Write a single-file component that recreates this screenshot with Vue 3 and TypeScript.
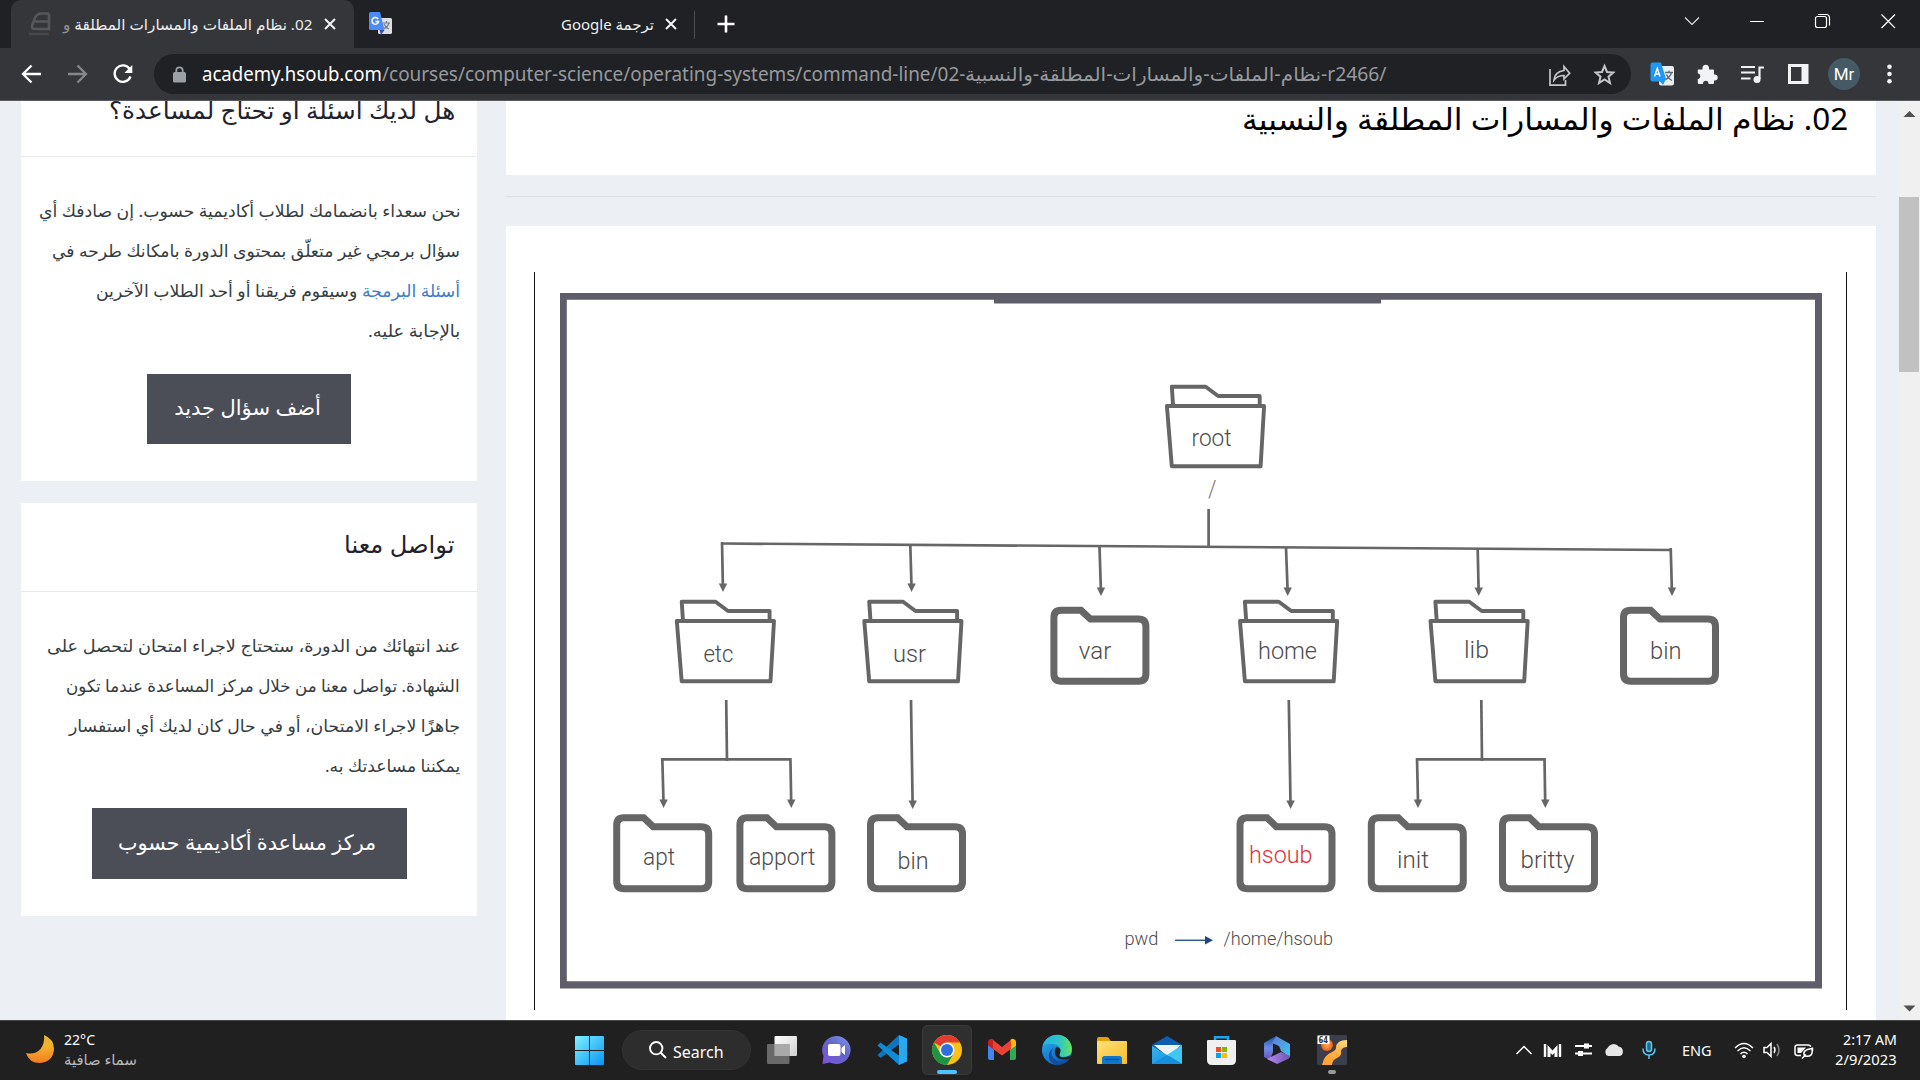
<script setup lang="ts">
interface Pt { x: number; y: number }
interface Label extends Pt { text: string; w: number; cls?: string; size?: number }
interface Line { text: string; w: number; link?: string }

/* Squeezes or stretches a single line of text to the given width. */
const vFit = {
  mounted(el: HTMLElement, binding: { value: number }) {
    const inner = el.firstElementChild as HTMLElement
    el.style.width = binding.value + 'px'
    const natural = inner.offsetWidth
    if (natural > 0) inner.style.transform = `scaleX(${binding.value / natural})`
  },
}

const openFolders: Pt[] = [
  { x: 1166.9, y: 406 }, { x: 676.8, y: 621 }, { x: 864.3, y: 621 }, { x: 1240, y: 621 }, { x: 1430.5, y: 621 },
]
const closedFolders: Pt[] = [
  { x: 1050.4, y: 606.7 }, { x: 1620, y: 606.7 }, { x: 613.2, y: 814.3 }, { x: 736.4, y: 814.3 },
  { x: 867, y: 814.3 }, { x: 1236.5, y: 814.3 }, { x: 1367.8, y: 814.3 }, { x: 1499, y: 814.3 },
]
const links: string[] = [
  'M722.3 543.5L1671.2 550', 'M1208.6 509V547',
  'M722 542L722.9 586', 'M910.3 545L911.5 586', 'M1099.5 547L1100.9 590', 'M1286 548L1287.6 590',
  'M1477.7 549L1478.6 590', 'M1670.7 548L1671.9 590',
  'M726.2 700L727 761', 'M662.3 759.3H790.4', 'M662.3 758L663.5 802', 'M790.4 758L791.2 802',
  'M911 700L912.6 803', 'M1288.8 700L1290.5 803', 'M1481.3 700L1482 761',
  'M1417 759.3H1544.5', 'M1417 758L1418 802', 'M1544.5 758L1545.2 802',
]
const tips: Pt[] = [
  { x: 723, y: 591 }, { x: 911.6, y: 591 }, { x: 1101, y: 595 }, { x: 1287.7, y: 595 }, { x: 1478.7, y: 595 },
  { x: 1672, y: 595 }, { x: 663.6, y: 807 }, { x: 791.3, y: 807 }, { x: 912.7, y: 808 }, { x: 1290.6, y: 808 },
  { x: 1418, y: 807 }, { x: 1545.3, y: 807 },
]
const labels: Label[] = [
  { text: 'root', x: 1191.5, y: 445.6, w: 40 }, { text: '/', x: 1208, y: 497, w: 8.5, cls: 'faint' },
  { text: 'etc', x: 703.4, y: 662, w: 30 }, { text: 'usr', x: 893, y: 662, w: 33 },
  { text: 'var', x: 1078.8, y: 659, w: 32.5 }, { text: 'home', x: 1258, y: 659, w: 59 },
  { text: 'lib', x: 1464, y: 658, w: 25 }, { text: 'bin', x: 1650, y: 659, w: 31.5 },
  { text: 'apt', x: 643, y: 865, w: 32 }, { text: 'apport', x: 749, y: 865, w: 66.5 },
  { text: 'bin', x: 897.5, y: 869, w: 31 }, { text: 'hsoub', x: 1249, y: 862.7, w: 63.5, cls: 'red' },
  { text: 'init', x: 1397, y: 868, w: 32 }, { text: 'britty', x: 1520.5, y: 868, w: 54 },
  { text: 'pwd', x: 1124.5, y: 945, w: 34, size: 18.5 }, { text: '/home/hsoub', x: 1223.5, y: 945, w: 109.5, size: 18.5 },
]

const askLines: Line[] = [
  { text: 'نحن سعداء بانضمامك لطلاب أكاديمية حسوب. إن صادفك أي', w: 421 },
  { text: 'سؤال برمجي غير متعلّق بمحتوى الدورة بامكانك طرحه في', w: 408 },
  { text: ' وسيقوم فريقنا أو أحد الطلاب الآخرين', w: 364, link: 'أسئلة البرمجة' },
  { text: 'بالإجابة عليه.', w: 92 },
]
const contactLines: Line[] = [
  { text: 'عند انتهائك من الدورة، ستحتاج لاجراء امتحان لتحصل على', w: 413 },
  { text: 'الشهادة. تواصل معنا من خلال مركز المساعدة عندما تكون', w: 394 },
  { text: 'جاهزًا لاجراء الامتحان، أو في حال كان لديك أي استفسار', w: 391 },
  { text: 'يمكننا مساعدتك به.', w: 135 },
]
</script>

<template>
  <div class="screen">
    <header class="tabs">
      <div class="tab active">
        <svg class="fav" width="22" height="24" viewBox="0 0 22 24" fill="none" stroke="#55575b" stroke-width="2.6"><path d="M20 1.5H12Q7 2 5.500 7L3 14Q2.500 17 6 17H20V1.500M6 9.500H19"/><path d="M0 22H20" stroke="#45474b"/></svg>
        <span class="fit t1" v-fit="249"><span dir="rtl">02. نظام الملفات والمسارات المطلقة <i>و</i></span></span>
        <svg class="x x1" width="12" height="12" viewBox="0 0 12 12" stroke="#f1f3f4" stroke-width="2"><path d="M1 1L11 11M11 1L1 11"/></svg>
      </div>
      <div class="tab second">
        <svg class="fav" width="23" height="24" viewBox="0 0 23 24"><rect x="9" y="6" width="14" height="16" rx="1.500" fill="#dcdfe2"/><path d="M14 11H21M17.500 9V11M20 11Q19 15 14 17M15 12Q17 16 20 17" stroke="#777c82" stroke-width="1.200" fill="none"/><path d="M1.500 0H11L15.500 18H1.500Q0 18 0 16.500V1.500Q0 0 1.500 0Z" fill="#4c8bf5"/><path d="M10.500 18H15.500L12 23Z" fill="#3451b2"/><path d="M9 7A3.300 3.300 0 1 0 9.500 9.500H6.500" stroke="#fff" stroke-width="1.500" fill="none"/></svg>
        <span class="fit t2" v-fit="93"><span dir="rtl">ترجمة Google</span></span>
        <svg class="x x2" width="12" height="12" viewBox="0 0 12 12" stroke="#f1f3f4" stroke-width="2"><path d="M1 1L11 11M11 1L1 11"/></svg>
      </div>
      <i class="sep"></i>
      <svg class="plus" width="18" height="18" viewBox="0 0 18 18" stroke="#fff" stroke-width="2.600"><path d="M9 0.500V17.500M0.500 9H17.500"/></svg>
      <div class="winbtns">
        <svg width="66" height="42" viewBox="0 0 66 42" fill="none" stroke="#e8e8e8" stroke-width="1.100"><path d="M26 17.500L33 24.500L40 17.500"/></svg>
        <svg width="65" height="42" viewBox="0 0 65 42" fill="none" stroke="#fff" stroke-width="1"><path d="M25 21.500H39"/></svg>
        <svg width="66" height="42" viewBox="0 0 66 42" fill="none" stroke="#fff" stroke-width="1.200"><rect x="25.500" y="16.500" width="11" height="11" rx="2"/><path d="M28 14.500H36Q39.500 14.500 39.500 18V25.500"/></svg>
        <svg width="64" height="42" viewBox="0 0 64 42" fill="none" stroke="#fff" stroke-width="1.200"><path d="M25.500 14.500L39 28M39 14.500L25.500 28"/></svg>
      </div>
    </header>

    <nav class="toolbar">
      <svg class="navs" width="154" height="52" viewBox="0 48 154 52" fill="none" stroke-width="2.300">
        <path stroke="#fff" d="M41 74H23.500M31.500 65.500L23 74L31.500 82.500"/>
        <path stroke="#85878b" d="M68 74H85.500M77.500 65.500L86 74L77.500 82.500"/>
        <path stroke="#fff" d="M129.800 69.300A8.200 8.200 0 1 0 130.500 76.500"/><path d="M132.300 65V73H124.300Z" fill="#fff"/>
      </svg>
      <div class="omni">
        <svg class="lock" width="13" height="17" viewBox="0 0 13 17"><rect y="6" width="13" height="10.500" rx="1.500" fill="#9aa0a6"/><path d="M3.300 7V4.500A3.200 3.200 0 0 1 9.700 4.500V7" fill="none" stroke="#9aa0a6" stroke-width="1.800"/></svg>
        <span class="fit host" v-fit="180"><span>academy.hsoub.com</span></span>
        <span class="fit" v-fit="583"><span>/courses/computer-science/operating-systems/command-line/02-</span></span>
        <span class="fit" v-fit="356"><span dir="rtl">نظام-الملفات-والمسارات-المطلقة-والنسبية</span></span>
        <span class="fit" v-fit="66"><span>-r2466/</span></span>
        <svg class="omniicons" width="84" height="40" viewBox="1547 54 84 40" fill="none" stroke="#c4c6c9" stroke-width="1.700">
          <path d="M1550 69V85.200H1565.500V80M1554 80Q1555 71.500 1564 70.500V66.500L1569.700 73.200L1564 79V75.500Q1557.500 75.500 1554 80Z"/>
          <path d="M1604.500 66L1607 72L1613.300 72.500L1608.500 76.700L1610 83L1604.500 79.500L1599 83L1600.500 76.700L1595.700 72.500L1602 72Z" stroke-width="2"/>
        </svg>
      </div>
      <svg width="289" height="52" viewBox="1631 48 289 52" fill="none">
        <rect x="1659" y="66" width="15" height="19.500" rx="2" fill="#eceff1"/><path d="M1665 72.500H1673M1669 70.500V72.500M1671.500 72.500Q1670.500 77 1665 80M1666.500 74.500Q1668.500 79 1672 80.500" stroke="#5f6b75" stroke-width="1.300"/>
        <path d="M1652.500 62.500H1661L1666 79L1663 85L1660 81.500H1652.500Q1650.500 81.500 1650.500 79.500V64.500Q1650.500 62.500 1652.500 62.500Z" fill="#2196f3"/><path d="M1654.500 76.500L1657.300 68.500L1660 76.500M1655.500 74H1659" stroke="#fff" stroke-width="1.400"/>
        <path d="M1698 69.500H1702.500V67.500A3.300 3.300 0 0 1 1709 67.500V69.500H1713Q1714 69.500 1714 70.500V74.500H1714.700A3 3 0 0 1 1714.700 80.500H1714V83Q1714 84 1713 84H1708.500V83A2.800 2.800 0 0 0 1703 83V84H1699Q1697.800 84 1697.800 83V79H1698.500A3 3 0 0 0 1698.500 73.500H1697.800V70Z" fill="#f1f3f4"/>
        <path d="M1741 67H1755M1741 72.500H1755M1741 78.500H1750.500M1759.500 79V67.500H1764" stroke="#f1f3f4" stroke-width="2.200"/><ellipse cx="1757" cy="79.500" rx="3.500" ry="3.500" fill="#f1f3f4"/>
        <path d="M1788 64H1808.500V84H1788ZM1791 67V81H1801.500V67Z" fill="#f1f3f4" fill-rule="evenodd"/>
        <circle cx="1844" cy="74" r="16" fill="#455a64"/>
        <text x="1844" y="80" text-anchor="middle" fill="#fff" font-size="17" font-family="Roboto, sans-serif">Mr</text>
        <circle cx="1889.500" cy="66.800" r="2.300" fill="#f1f3f4"/><circle cx="1889.500" cy="74" r="2.300" fill="#f1f3f4"/><circle cx="1889.500" cy="81.200" r="2.300" fill="#f1f3f4"/>
      </svg>
    </nav>

    <main class="page">
      <aside>
        <section class="card ask">
          <h3><span class="fit" v-fit="346"><span dir="rtl">هل لديك أسئلة أو تحتاج لمساعدة؟</span></span></h3>
          <div class="lines">
            <span v-for="l in askLines" :key="l.text" class="fit" v-fit="l.w"><span dir="rtl"><a v-if="l.link">{{ l.link }}</a>{{ l.text }}</span></span>
          </div>
          <button class="b1"><span class="fit" v-fit="147"><span dir="rtl">أضف سؤال جديد</span></span></button>
        </section>
        <section class="card contact">
          <h3><span class="fit" v-fit="111"><span dir="rtl">تواصل معنا</span></span></h3>
          <div class="lines">
            <span v-for="l in contactLines" :key="l.text" class="fit" v-fit="l.w"><span dir="rtl">{{ l.text }}</span></span>
          </div>
          <button class="b2"><span class="fit" v-fit="258"><span dir="rtl">مركز مساعدة أكاديمية حسوب</span></span></button>
        </section>
      </aside>

      <article>
        <div class="title"><span class="fit" v-fit="606"><span dir="rtl">02. نظام الملفات والمسارات المطلقة والنسبية</span></span></div>
        <hr>
        <div class="lesson">
          <div class="figure">
            <svg width="1311" height="738" viewBox="535 272 1311 738">
              <path fill="#5d5e6a" fill-rule="evenodd" d="M560 293H1822V988.500H560ZM566.800 299.800V981.300H1815V299.800Z"/>
              <rect x="994" y="299" width="387" height="4.500" fill="#5d5e6a"/>
              <g fill="none" stroke="#666" stroke-width="2.700"><path v-for="d in links" :key="d" :d="d"/></g>
              <path v-for="(t, i) in tips" :key="'t' + i" :transform="`translate(${t.x} ${t.y})`" d="M0 1L-4.200-7.500H4.200Z" fill="#666"/>
              <g v-for="(f, i) in openFolders" :key="'o' + i" :transform="`translate(${f.x} ${f.y})`" fill="none" stroke="#666" stroke-width="3.900" stroke-linejoin="round">
                <path d="M0 0H97.200L93.700 60.300H4.900Z"/><path d="M6.200 0L4.900-19.300H38.800L51.200-10H92.800V0"/>
              </g>
              <g v-for="(f, i) in closedFolders" :key="'c' + i" :transform="`translate(${f.x} ${f.y})`" fill="none" stroke="#666" stroke-width="7">
                <path d="M10.500 3.500H30.500L40 12.400H88Q95.500 12.400 95.500 20V67Q95.500 74.500 88 74.500H11Q3.500 74.500 3.500 67V11Q3.500 3.500 10.500 3.500Z"/>
              </g>
              <text v-for="(l, i) in labels" :key="'l' + i" :x="l.x" :y="l.y" :class="['lbl', l.cls]" :font-size="l.size ?? 23" :textLength="l.w" lengthAdjust="spacingAndGlyphs">{{ l.text }}</text>
              <path d="M1175 940.300H1206" stroke="#33588f" stroke-width="1.500"/><path d="M1205 936L1213 940.300L1205 944.600Z" fill="#26457e"/>
            </svg>
          </div>
        </div>
      </article>

      <div class="scroll">
        <svg width="21" height="96" viewBox="0 0 21 96"><path d="M10.500 10L16.500 16H4.500Z" fill="#505050"/></svg>
        <i class="thumb"></i>
        <svg class="down" width="21" height="21" viewBox="0 0 21 21"><path d="M10.500 12.500L4.500 6.500H16.500Z" fill="#505050"/></svg>
      </div>
    </main>

    <footer class="taskbar">
      <svg class="moon" width="28" height="29" viewBox="0 0 28 29"><defs><linearGradient id="mg" x2="0" y2="1"><stop stop-color="#e8b23a"/><stop offset=".4" stop-color="#f3b22c"/><stop offset="1" stop-color="#f47c20"/></linearGradient></defs><path d="M18 0Q28 4 28 14Q27 27 14 28Q3 28 0 18Q9 20 14.500 14Q19 8 18 0Z" fill="url(#mg)"/></svg>
      <div class="weather"><span class="fit" v-fit="31"><span>22°C</span></span><span class="fit clear" v-fit="73"><span dir="rtl">سماء صافية</span></span></div>

      <svg class="start" width="29" height="29" viewBox="0 0 29 29"><defs><linearGradient id="wg" x2="1" y2="1"><stop stop-color="#7df3ff"/><stop offset="1" stop-color="#0a93f5"/></linearGradient></defs><path fill="url(#wg)" d="M0 1Q0 0 1 0H14V14H0ZM15 0H28Q29 0 29 1V14H15ZM0 15H14V29H1Q0 29 0 28ZM15 15H29V28Q29 29 28 29H15Z"/></svg>
      <div class="search">
        <svg width="18" height="18" viewBox="0 0 18 18" fill="none" stroke="#fff" stroke-width="1.900"><circle cx="7.200" cy="7.200" r="6.200"/><path d="M11.500 11.500L17 17"/></svg>
        <span class="fit" v-fit="51"><span>Search</span></span>
      </div>

      <svg class="apps" width="590" height="60" viewBox="762 1020 590 60">
        <defs>
          <linearGradient id="tv" x2="1" y2="1"><stop stop-color="#fff"/><stop offset="1" stop-color="#cfcfcf"/></linearGradient>
          <linearGradient id="ch" x1="1" y1="0" x2="0.200" y2="1"><stop stop-color="#7c9bf0"/><stop offset=".5" stop-color="#6264c8"/><stop offset="1" stop-color="#7a55d8"/></linearGradient>
          <linearGradient id="e1" x2="1"><stop stop-color="#1fb5ee"/><stop offset=".6" stop-color="#2fc7c0"/><stop offset="1" stop-color="#6be35a"/></linearGradient>
          <linearGradient id="e2" x2="0.600" y2="1"><stop stop-color="#2fb3ec"/><stop offset="1" stop-color="#0a5fc4"/></linearGradient>
          <linearGradient id="fo" x2="1" y2="1"><stop stop-color="#ffe07a"/><stop offset="1" stop-color="#f8bd28"/></linearGradient>
          <linearGradient id="ml" x2="1" y2="1"><stop stop-color="#34b2ee"/><stop offset="1" stop-color="#118fe0"/></linearGradient>
          <linearGradient id="m1" x2="0" y2="1"><stop stop-color="#1a4fa0"/><stop offset=".5" stop-color="#6b8de8"/><stop offset="1" stop-color="#6c4fb8"/></linearGradient>
          <linearGradient id="m2" x2="1" y2="1"><stop stop-color="#5f7bd8"/><stop offset="1" stop-color="#3fc6f0"/></linearGradient>
          <linearGradient id="m3" x2="1"><stop stop-color="#b98af0"/><stop offset="1" stop-color="#6d55b5"/></linearGradient>
          <radialGradient id="or"><stop stop-color="#ffb060"/><stop offset="1" stop-color="#f05a10"/></radialGradient>
          <linearGradient id="or2" x1="1" x2="0" y2="1"><stop stop-color="#ffe080"/><stop offset=".5" stop-color="#ffad42"/><stop offset="1" stop-color="#ffa030"/></linearGradient>
        </defs>
        <rect x="774.500" y="1036" width="22.500" height="20" rx="1" fill="url(#tv)"/><rect x="767" y="1044" width="22.500" height="20" rx="1" fill="#777" opacity=".85"/><rect x="774.500" y="1044" width="15" height="12" fill="#a9a9a9"/>
        <path d="M836.500 1036A14.200 14 0 1 1 830 1062.500L822.500 1064L823.500 1056A14.200 14 0 0 1 836.500 1036Z" fill="url(#ch)"/><rect x="828" y="1044" width="12.500" height="12" rx="2" fill="#fff"/><path d="M841.500 1048L845 1045V1055L841.500 1052Z" fill="#fff"/>
        <path d="M899 1035L877.500 1055L880.500 1058L901 1043Z" fill="#0c76bf"/><path d="M899 1065L877.500 1045.500L880.500 1042.500L901 1057Z" fill="#0f8ad6"/><path d="M899 1035L907 1038.500V1061.500L899 1065Z" fill="#29a8f0"/>
        <rect x="922.500" y="1025.500" width="49" height="49" rx="5" fill="#2f2f2f" stroke="#3a3a3a"/>
        <circle cx="947" cy="1050" r="15" fill="#fbc116"/><path d="M947 1050L934 1042.500A15 15 0 0 1 960 1042.500H947Z" fill="#e33b2e"/><path d="M934 1042.500A15 15 0 0 0 947 1065L953.500 1053.700L947 1050L940.500 1053.700Z" fill="#1e9447"/>
        <circle cx="947" cy="1050" r="7.500" fill="#fff"/><circle cx="947" cy="1050" r="6" fill="#2f6fe0"/><rect x="937" y="1070" width="20" height="4" rx="2" fill="#4cc2ff"/>
        <path d="M988 1045H994V1060H990Q988 1060 988 1058Z" fill="#4285f4"/><path d="M1010 1045H1016V1058Q1016 1060 1014 1060H1010Z" fill="#34a853"/><path d="M988 1042A3.200 3.200 0 0 1 994 1040.500V1050L988 1045.500Z" fill="#c5221f"/><path d="M1016 1042A3.200 3.200 0 0 0 1010 1040.500V1050L1016 1045.500Z" fill="#fbbc04"/><path d="M993 1040L1002 1047L1011 1040V1049L1002 1055.500L993 1049Z" fill="#ea4335"/>
        <circle cx="1057" cy="1050" r="15" fill="url(#e2)"/><path d="M1042.500 1046A15 15 0 0 1 1072 1049Q1072 1057 1063 1057Q1058 1057 1060 1053Q1062 1045 1053 1044Q1046 1043 1042.500 1046Z" fill="url(#e1)"/><path d="M1054 1047Q1048 1055 1056 1060Q1063 1063 1070 1058Q1066 1065 1057 1065Q1046 1062 1050 1051Z" fill="#124f9c"/><path d="M1056.500 1047Q1062 1048 1060 1053Q1058 1057 1063 1057.500L1071 1056L1069 1059Q1059 1061 1056 1056Q1053 1051 1056.500 1047Z" fill="#202020"/>
        <path d="M1097 1039Q1097 1037 1099 1037H1107Q1109 1037 1110 1040L1112 1043H1097Z" fill="#e0a008"/><rect x="1097" y="1041" width="30" height="23" rx="1" fill="url(#fo)"/><path d="M1102 1064V1058.500Q1102 1056 1104.500 1056H1119.500Q1122 1056 1122 1058.500V1064Z" fill="#0f78cc"/><path d="M1105 1059.500H1119" stroke="#064a86" stroke-width="1.200"/>
        <path d="M1152 1045L1167 1036L1182 1045V1050H1152Z" fill="#0f5fb0"/><path d="M1154 1045H1181L1168 1057Z" fill="#eef3f6"/><path d="M1152 1046L1182 1064H1152Z" fill="url(#ml)"/><path d="M1182 1045V1064L1167 1055Z" fill="#3fc8f4"/><path d="M1152 1064L1167 1055L1182 1064Z" fill="#1490dd"/>
        <path d="M1215 1042V1037.300H1228V1042" fill="none" stroke="#20a4e8" stroke-width="2.500"/><path d="M1207 1041Q1207 1040 1208 1040H1235Q1236 1040 1236 1041V1060Q1236 1065 1231 1065H1212Q1207 1065 1207 1060Z" fill="#f0f0f0"/><rect x="1216" y="1047" width="5" height="5" fill="#f25022"/><rect x="1222" y="1047" width="5" height="5" fill="#7fba00"/><rect x="1216" y="1053" width="5" height="5" fill="#00a4ef"/><rect x="1222" y="1053" width="5" height="5" fill="#ffb900"/>
        <path d="M1276 1036L1264 1043V1057L1270 1060L1273 1052V1044Z" fill="url(#m1)"/><path d="M1276 1036L1290 1044V1057L1281 1051L1279 1046L1272 1043Z" fill="url(#m2)"/><path d="M1267 1059L1281 1052L1290 1056Q1290 1058 1288 1059L1277 1064Z" fill="url(#m3)"/>
        <rect x="1317" y="1035" width="30" height="30" rx="1.500" fill="#3a3f4b"/><circle cx="1327" cy="1045" r="6" fill="url(#or)"/><path d="M1347 1040Q1336 1040 1336 1048Q1336 1050 1332 1052Q1324 1055 1322 1065H1332Q1332 1060 1337 1058Q1342 1056 1341 1051Q1342 1047 1347 1047Z" fill="url(#or2)"/><rect x="1317.500" y="1035.500" width="12" height="8.500" fill="#fff"/><text x="1318.500" y="1042.800" font-size="8" font-weight="700" font-family="DejaVu Sans, sans-serif" textLength="9.500" lengthAdjust="spacingAndGlyphs" fill="#333">64</text><rect x="1328" y="1070" width="8" height="4" rx="2" fill="#9a9a9a"/>
      </svg>

      <svg class="tray" width="150" height="60" viewBox="1512 1020 150 60" fill="none" stroke="#fff" stroke-width="1.500">
        <path d="M1516.500 1054L1524 1046.500L1531.500 1054"/>
        <path d="M1545 1044V1057M1560 1044V1057" stroke-width="2.400"/><path d="M1547.500 1045L1552.500 1050.500L1557.500 1045V1057H1554.500V1053L1552.500 1055L1550.500 1053V1057H1547.500Z" fill="#fff" stroke="none"/>
        <path d="M1575 1046H1592M1575 1053.500H1592" stroke-width="2"/><path d="M1584 1043.500H1589V1048.500H1584ZM1578 1051H1583V1056H1578Z" fill="#fff" stroke="none"/>
        <path d="M1608 1056A4.500 4.500 0 0 1 1607.500 1048A6.500 6.500 0 0 1 1618.500 1046.500A5 5 0 0 1 1620 1056Z" fill="#e6e6e6" stroke="none"/>
        <rect x="1646.500" y="1041.500" width="5" height="10" rx="2.500" stroke="#5cc5f4" fill="#1d6a8a"/><path d="M1643 1048.500Q1643 1055 1649 1055Q1655 1055 1655 1048.500M1649 1055V1059" stroke="#5cc5f4"/>
      </svg>
      <span class="fit eng" v-fit="30"><span>ENG</span></span>
      <svg class="tray2" width="86" height="60" viewBox="1730 1020 86 60" fill="none" stroke="#fff" stroke-width="1.500">
        <path d="M1735 1048Q1744 1039 1753 1048M1737.500 1051Q1744 1044.500 1750.500 1051M1740.500 1054Q1744 1050.500 1747.500 1054"/><circle cx="1744" cy="1056.500" r="1.800" fill="#fff" stroke="none"/>
        <path d="M1764 1047.500H1767L1771 1043.500V1056.500L1767 1052.500H1764Z"/><path d="M1774 1047Q1776 1050 1774 1053"/><path d="M1777 1044Q1781 1050 1777 1056" stroke="#888"/>
        <path d="M1801 1055.500H1797.500Q1795 1055.500 1795 1053V1047.500Q1795 1045 1797.500 1045H1808Q1810.500 1045 1810.500 1047M1812.500 1047.500V1051"/><path d="M1797.500 1047.500H1806L1801 1053H1797.500Z" fill="#fff" stroke="none"/><path d="M1802 1058.500L1806 1054.500M1804.500 1056Q1801.500 1050 1812 1048.500Q1813.500 1058 1804.500 1056Z"/>
      </svg>
      <div class="clock"><span class="fit" v-fit="54"><span>2:17 AM</span></span><span class="fit" v-fit="62"><span>2/9/2023</span></span></div>
    </footer>
  </div>
</template>

<style>
body { margin: 0; overflow: hidden; }
</style>

<style scoped>
* { box-sizing: border-box; }
.screen { width: 1920px; height: 1080px; display: flex; flex-direction: column; overflow: hidden; background: #ecf0f5; font-family: "Noto Sans", "DejaVu Sans", sans-serif; }
svg { display: block; flex: none; }
.fit { display: block; flex: none; direction: ltr; white-space: pre; }
.fit > span { display: inline-block; transform-origin: 0 50%; white-space: pre; }

.tabs { height: 48px; flex: none; background: #202124; display: flex; align-items: flex-start; color: #eceef0; font-size: 15px; line-height: 48px; }
.tab { height: 48px; display: flex; align-items: center; }
.active { margin-left: 11px; width: 343px; background: #35363a; border-radius: 10px 10px 0 0; padding-left: 18px; }
.t1 { margin-left: 12px; }
.t1 i { font-style: normal; opacity: .5; }
.x1 { margin-left: 12px; }
.second { width: 340px; padding-left: 15px; }
.t2 { margin-left: 169px; }
.x2 { margin-left: 11px; }
.sep { width: 1px; height: 28px; margin-top: 11px; background: #4a4c50; }
.plus { margin: 15px 0 0 22px; }
.winbtns { margin-left: auto; display: flex; width: 261px; }

.toolbar { height: 53px; flex: none; background: #35363a; border-bottom: 1px solid #5a5b5f; display: flex; }
.omni { margin-top: 6px; width: 1477px; height: 40px; border-radius: 20px; background: #202124; display: flex; align-items: center; color: #969a9e; font-size: 19px; line-height: 38px; }
.lock { margin: 0 16px 0 19px; }
.host { color: #fff; }
.omniicons { margin-left: auto; }

.page { height: 919px; flex: none; display: flex; overflow: hidden; }
aside { width: 456px; margin-left: 21px; display: flex; flex-direction: column; gap: 22px; }
.card { background: #fff; display: flex; flex-direction: column; align-items: center; flex: none; }
.card h3 { margin: 0; width: 100%; display: flex; justify-content: flex-end; border-bottom: 1px solid #e8eaee; padding-right: 22px; font-weight: 400; font-size: 24px; color: #22222e; }
.ask { height: 380px; }
.ask h3 { height: 56px; line-height: 18px; }
.contact { height: 413px; }
.contact h3 { height: 89px; line-height: 82px; }
.lines { width: 100%; padding-right: 17px; display: flex; flex-direction: column; align-items: flex-end; font-size: 17px; line-height: 40px; color: #353c41; }
.lines a { color: #3d7cc9; }
.ask .lines { margin-top: 34px; }
.contact .lines { margin-top: 34px; }
.lines .fit { height: 40px; }
.card button { border: 0; padding: 0 2px 4px 0; background: #4c4e57; color: #fff; font: inherit; font-size: 21px; display: flex; align-items: center; justify-content: center; }
.card button.b1 { padding-right: 0; }
.b1 { width: 204px; height: 70px; margin-top: 23px; }
.b2 { width: 315px; height: 71px; margin-top: 22px; }
.card button .fit { margin-left: -1px; margin-right: 2px; }

article { width: 1370px; margin-left: 29px; }
.title { height: 74px; background: #fff; display: flex; justify-content: flex-end; padding-right: 28px; font-size: 30px; line-height: 36px; color: #000; }
hr { margin: 21px 0 0; border: 0; height: 1px; background: #dde1e8; }
.lesson { margin-top: 29px; height: 794px; background: #fff; padding: 46px 29px 0 28px; }
.figure { width: 1313px; height: 738px; border-left: 1px solid #111; border-right: 1px solid #111; }
.lbl { font-family: Roboto, sans-serif; font-weight: 300; fill: #4c4c4c; }
.faint { fill: #777; }
.red { fill: #e0313c; }

.scroll { width: 21px; margin-left: auto; background: #f0f0f0; display: flex; flex-direction: column; }
.thumb { width: 20px; height: 175px; background: #c1c1c1; }
.down { margin-top: auto; }

.taskbar { height: 60px; flex: none; background: #202020; border-top: 1px solid #474747; display: flex; color: #fff; font-size: 15px; }
.moon { margin: 14px 0 0 26px; }
.weather { margin: 8px 0 0 10px; width: 73px; line-height: 20px; }
.clear { color: #b8b8b8; }
.start { margin: 15px 0 0 438px; }
.search { margin: 9px 0 0 18px; width: 129px; height: 40px; border-radius: 20px; background: #2d2d2d; border: 1px solid #333; display: flex; align-items: center; padding-left: 26px; gap: 6px; font-size: 16px; line-height: 38px; }
.search .fit { margin-top: 3px; }
.apps { margin: -1px 0 0 11px; }
.tray { margin: -1px 0 0 160px; }
.eng { margin-left: 20px; line-height: 58px; }
.tray2 { margin: -1px 0 0 18px; }
.clock { margin: 8px 23px 0 auto; width: 66px; display: flex; flex-direction: column; align-items: flex-end; line-height: 20px; }
</style>
